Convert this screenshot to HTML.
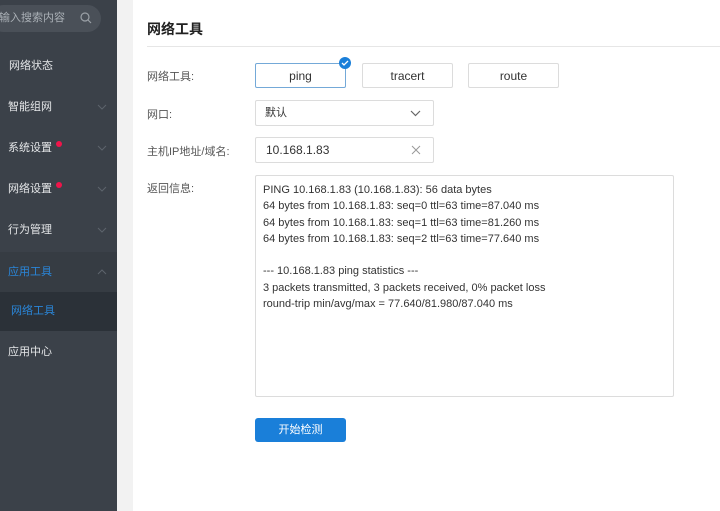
<!DOCTYPE html>
<html><head><meta charset="utf-8"><style>
*{margin:0;padding:0;box-sizing:border-box}
body{width:720px;height:511px;overflow:hidden;font-family:"Liberation Sans","Noto Sans CJK SC",sans-serif;background:#f2f2f2;position:relative;font-size:12px}
.side{position:absolute;left:0;top:0;width:117px;height:511px;background:#3b4149}
.search{position:absolute;left:-10px;top:5px;width:111px;height:27px;border-radius:14px;background:#4a5058;color:#aab0b6;font-size:11px;line-height:27px;padding-left:9px}
.search svg{position:absolute;right:9px;top:7px}
.mi{position:absolute;left:0;width:117px;height:41px;line-height:41px;color:#e4e6e8;font-size:11px}
.mi .t{position:absolute;left:8px}
.mi .dot{position:absolute;top:13px;width:6px;height:6px;border-radius:3px;background:#f0144a}
.mi svg{position:absolute;right:10px;top:17px}
.card{position:absolute;left:133px;top:0;width:587px;height:511px;background:#fff}
.title{position:absolute;left:147px;top:19px;font-size:14px;color:#222;font-weight:bold}
.hr{position:absolute;left:147px;top:46px;width:573px;height:1px;background:#e6e6e6}
.lbl{position:absolute;left:147px;font-size:11px;color:#555}
.box{position:absolute;border:1px solid #dcdcdc;border-radius:2px;background:#fff;font-size:12px;color:#333}
.btn{text-align:center;line-height:24px}
</style></head><body>
<div class="side">
<div class="search">输入搜索内容<svg width="12" height="12" viewBox="0 0 12 12"><circle cx="5" cy="5" r="4" fill="none" stroke="#9aa0a6" stroke-width="1.2"/><path d="M8 8l3 3" stroke="#9aa0a6" stroke-width="1.2"/></svg></div>
<div class="mi" style="top:46px"><span class="t" style="left:9px">网络状态</span></div>
<div class="mi" style="top:87px"><span class="t">智能组网</span><svg width="10" height="6"><path d="M1 1l4 4 4-4" fill="none" stroke="#5d646c"/></svg></div>
<div class="mi" style="top:128px"><span class="t">系统设置</span><span class="dot" style="left:56px"></span><svg width="10" height="6"><path d="M1 1l4 4 4-4" fill="none" stroke="#5d646c"/></svg></div>
<div class="mi" style="top:169px"><span class="t">网络设置</span><span class="dot" style="left:56px"></span><svg width="10" height="6"><path d="M1 1l4 4 4-4" fill="none" stroke="#5d646c"/></svg></div>
<div class="mi" style="top:210px"><span class="t">行为管理</span><svg width="10" height="6"><path d="M1 1l4 4 4-4" fill="none" stroke="#5d646c"/></svg></div>
<div class="mi" style="top:252px;background:#363c43;color:#2a86d9"><span class="t">应用工具</span><svg width="10" height="6"><path d="M1 5l4-4 4 4" fill="none" stroke="#5d646c"/></svg></div>
<div class="mi" style="top:292px;background:#2b3138;color:#2a86d9;height:39px;line-height:39px"><span class="t" style="left:11px">网络工具</span></div>
<div class="mi" style="top:332px"><span class="t">应用中心</span></div>
</div>
<div class="card"></div>
<div class="title">网络工具</div>
<div class="hr"></div>
<div class="lbl" style="top:68px">网络工具:</div>
<div class="lbl" style="top:106px">网口:</div>
<div class="lbl" style="top:143px">主机IP地址/域名:</div>
<div class="lbl" style="top:180px">返回信息:</div>
<div class="box btn" style="left:255px;top:63px;width:91px;height:25px;border:1px solid #74a9d8">ping</div>
<svg style="position:absolute;left:339px;top:57px" width="12" height="12"><circle cx="6" cy="6" r="6" fill="#1a7fd9"/><path d="M3 6l2 2 4-4" fill="none" stroke="#fff" stroke-width="1.3"/></svg>
<div class="box btn" style="left:362px;top:63px;width:91px;height:25px">tracert</div>
<div class="box btn" style="left:468px;top:63px;width:91px;height:25px">route</div>
<div class="box" style="left:255px;top:100px;width:179px;height:26px;line-height:24px;padding-left:9px;font-size:11px">默认<svg style="position:absolute;right:12px;top:9px" width="11" height="7"><path d="M1 1l4.5 4.5L10 1" fill="none" stroke="#666" stroke-width="1.2"/></svg></div>
<div class="box" style="left:255px;top:137px;width:179px;height:26px;line-height:24px;padding-left:10px">10.168.1.83<svg style="position:absolute;right:12px;top:7px" width="10" height="10"><path d="M1 1l8 8M9 1l-8 8" stroke="#999" stroke-width="1"/></svg></div>
<div class="box" style="left:255px;top:175px;width:419px;height:222px;padding:6px 7px;line-height:16.3px;font-size:11px;color:#333">PING 10.168.1.83 (10.168.1.83): 56 data bytes<br>64 bytes from 10.168.1.83: seq=0 ttl=63 time=87.040 ms<br>64 bytes from 10.168.1.83: seq=1 ttl=63 time=81.260 ms<br>64 bytes from 10.168.1.83: seq=2 ttl=63 time=77.640 ms<br><br>--- 10.168.1.83 ping statistics ---<br>3 packets transmitted, 3 packets received, 0% packet loss<br>round-trip min/avg/max = 77.640/81.980/87.040 ms</div>
<div style="position:absolute;left:255px;top:418px;width:91px;height:24px;background:#1a7fd9;border-radius:3px;color:#fff;text-align:center;line-height:24px;font-size:11px">开始检测</div>
</body></html>
